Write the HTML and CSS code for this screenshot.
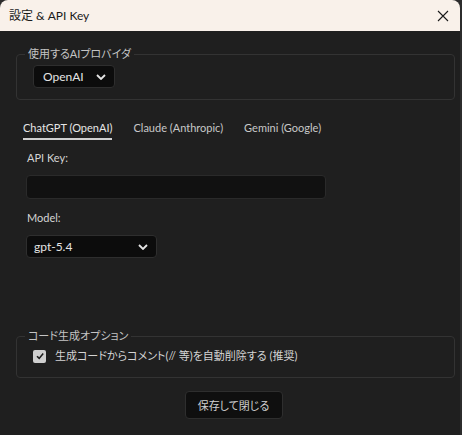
FILE: index.html
```html
<!DOCTYPE html>
<html lang="ja">
<head>
<meta charset="utf-8">
<title>設定 &amp; API Key</title>
<link rel="stylesheet" href="styles.css">
</head>
<body>
<div class="window">
  <div class="titlebar">
    <span class="title">設定 &amp; API Key</span>
    <svg class="close" width="12" height="12" viewBox="0 0 12 12"><path d="M1 1L11 11M11 1L1 11" stroke="#1a1a1a" stroke-width="1.1" fill="none"/></svg>
  </div>
  <div class="content">
    <fieldset class="group provider">
      <legend>使用するAIプロバイダ</legend>
      <div class="select small">
        <span>OpenAI</span>
        <svg class="chev" width="10" height="6" viewBox="0 0 10 6"><path d="M1 1L5 5L9 1" stroke="#e6e6e6" stroke-width="1.8" fill="none"/></svg>
      </div>
    </fieldset>

    <div class="tabs">
      <span class="tab active">ChatGPT (OpenAI)</span>
      <span class="tab">Claude (Anthropic)</span>
      <span class="tab">Gemini (Google)</span>
    </div>

    <div class="pane">
      <div class="label">API Key:</div>
      <div class="input"></div>
      <div class="label model-label">Model:</div>
      <div class="select model">
        <span>gpt-5.4</span>
        <svg class="chev" width="10" height="6" viewBox="0 0 10 6"><path d="M1 1L5 5L9 1" stroke="#e6e6e6" stroke-width="1.8" fill="none"/></svg>
      </div>
    </div>

    <fieldset class="group options">
      <legend>コード生成オプション</legend>
      <div class="check-row">
        <span class="checkbox"><svg width="10" height="10" viewBox="0 0 10 10"><path d="M2 5.2L4.2 7.4L8.2 2.6" stroke="#1c1c1c" stroke-width="1.6" fill="none"/></svg></span>
        <span class="check-text">生成コードからコメント(// 等)を自動削除する (推奨)</span>
      </div>
    </fieldset>

    <div class="actions">
      <button class="btn">保存して閉じる</button>
    </div>
  </div>
</div>
</body>
</html>
```

FILE: styles.css
```css
html, body {
  margin: 0;
  padding: 0;
  background: #2c2c2c;
}
body {
  width: 462px;
  height: 435px;
  overflow: hidden;
  font-family: Lato, "Noto Sans CJK JP", sans-serif;
  font-size: 12px;
  font-feature-settings: "palt";
  color: #d6d6d6;
}
.window {
  width: 460px;
  height: 435px;
  background: #1f1f1f;
  border-radius: 8px 8px 0 0;
  overflow: hidden;
  display: flex;
  flex-direction: column;
}
.titlebar {
  height: 31px;
  flex: none;
  background: #f9f1ea;
  display: flex;
  align-items: center;
  justify-content: space-between;
  padding: 0 11px 0 9px;
  color: #1a1a1a;
}
.title {
  font-size: 12px;
  line-height: 16px;
}
.content {
  display: flex;
  flex-direction: column;
  padding: 0 5px 0 16px;
}
.group {
  margin: 0;
  border: 1px solid #333333;
  border-radius: 4px;
  padding: 0 10px 10px 16px;
  min-width: 0;
}
.group legend {
  font-size: 11px;
  line-height: 14px;
  padding: 0 3px;
  margin-left: -8px;
  color: #c4c4c4;
}
.provider {
  margin-top: 16px;
  padding-top: 4px;
  padding-bottom: 11px;
}
.select {
  background: #0c0c0c;
  border: 1px solid #2e2e2e;
  border-radius: 4px;
  height: 23px;
  box-sizing: border-box;
  display: flex;
  align-items: center;
  justify-content: space-between;
  padding: 0 8px 0 9px;
  color: #e4e4e4;
}
.select.small {
  width: 82px;
}
.select.model {
  width: 131px;
  height: 23px;
  padding: 0 8px 0 7px;
}
.tabs {
  display: flex;
  gap: 21px;
  margin: 19px 0 0 7px;
  font-size: 11px;
}
.tab {
  color: #c8c8c8;
  line-height: 18px;
  padding-bottom: 1px;
  border-bottom: 2px solid transparent;
}
.tab.active {
  color: #e6e6e6;
  border-bottom-color: #d0d0d0;
}
.pane {
  display: flex;
  flex-direction: column;
  padding-left: 10px;
}
.label {
  font-size: 11px;
  line-height: 14px;
  margin-top: 11px;
  margin-left: 1px;
  color: #d4d4d4;
}
.input {
  margin-top: 10px;
  width: 300px;
  height: 24px;
  box-sizing: border-box;
  background: #111111;
  border: 1px solid #2a2a2a;
  border-radius: 4px;
}
.model-label {
  margin-top: 12px;
}
.select.model {
  margin-top: 10px;
}
.options {
  margin-top: 71px;
  padding-top: 6px;
  padding-bottom: 14px;
}
.check-row {
  display: flex;
  align-items: center;
  gap: 9px;
  line-height: 14px;
}
.checkbox {
  width: 13px;
  height: 13px;
  border-radius: 2px;
  background: #cfcfcf;
  display: flex;
  align-items: center;
  justify-content: center;
}
.check-text {
  font-size: 11px;
  color: #d4d4d4;
}
.actions {
  display: flex;
  justify-content: center;
  margin-top: 13px;
  padding-right: 4px;
}
.btn {
  width: 98px;
  height: 28px;
  background: #0f0f0f;
  border: 1px solid #2e2e2e;
  border-radius: 4px;
  color: #d0d0d0;
  font-family: Lato, "Noto Sans CJK JP", sans-serif;
  font-feature-settings: "palt";
  font-size: 11px;
  padding: 0;
}
```
